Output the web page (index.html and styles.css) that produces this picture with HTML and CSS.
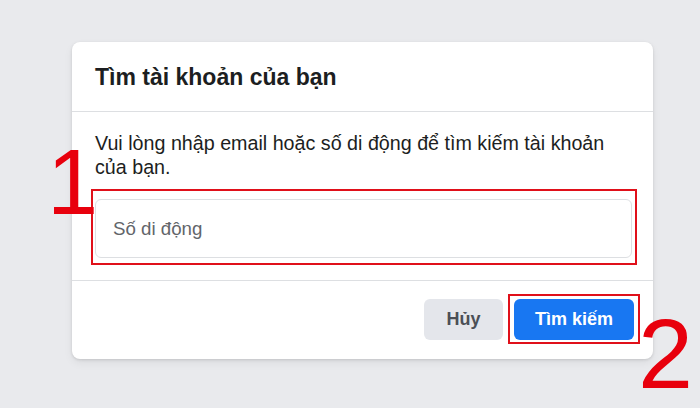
FILE: index.html
```html
<!DOCTYPE html>
<html lang="vi">
<head>
<meta charset="utf-8">
<title>Tìm tài khoản của bạn</title>
<link rel="stylesheet" href="styles.css">
</head>
<body>
<div class="stage">
  <div class="card">
    <div class="card-head">
      <h2 class="title">Tìm tài khoản của bạn</h2>
    </div>
    <div class="card-body">
      <p class="desc">Vui lòng nhập email hoặc số di động để tìm kiếm tài khoản của bạn.</p>
      <div class="mark mark-input">
        <div class="input">Số di động</div>
        <span class="num num-1">1</span>
      </div>
    </div>
    <div class="card-foot">
      <button class="btn btn-cancel">Hủy</button>
      <div class="mark mark-btn">
        <button class="btn btn-primary">Tìm kiếm</button>
        <span class="num num-2">2</span>
      </div>
    </div>
  </div>
</div>
</body>
</html>
```

FILE: styles.css
```css
* { box-sizing: border-box; }
html, body {
  margin: 0;
  padding: 0;
  background: #e9eaed;
  font-family: "Liberation Sans", Arial, Helvetica, sans-serif;
  color: #1c1e21;
}
.stage {
  width: 700px;
  height: 408px;
  padding: 42px 0 0 72px;
}
.card {
  width: 581px;
  background: #fff;
  border-radius: 8px;
  box-shadow: 0 1px 3px rgba(0,0,0,0.12), 0 4px 10px rgba(0,0,0,0.06);
}
.card-head {
  height: 70px;
  display: flex;
  align-items: center;
  padding: 0 23px;
  border-bottom: 1px solid #dddfe2;
}
.title {
  margin: 0;
  font-size: 23px;
  font-weight: bold;
  color: #1c1e21;
  line-height: 26px;
  padding-top: 1px;
}
.card-body {
  padding: 19px 16px 15px 19px;
  border-bottom: 1px solid #dddfe2;
}
.desc {
  margin: 0 0 10px 4px;
  max-width: 525px;
  font-size: 19.7px;
  line-height: 24px;
  color: #1c1e21;
}
.mark {
  position: relative;
  border: 2px solid #e0101a;
}
.mark-input {
  padding: 8px 3px 5px 2px;
}
.input {
  height: 59px;
  border: 1px solid #dddfe2;
  border-radius: 6px;
  padding: 0 17px;
  display: flex;
  align-items: center;
  font-size: 18.7px;
  color: #62656a;
}
.num {
  position: absolute;
  color: #e8000d;
  font-family: "Liberation Sans", Arial, sans-serif;
  line-height: 1;
}
.num-1 {
  font-size: 92px;
  left: -46px;
  top: -55px;
}
.num-2 {
  font-size: 99px;
  left: 128px;
  top: 8px;
}
.card-foot {
  height: 78px;
  display: flex;
  justify-content: flex-end;
  align-items: flex-start;
  padding: 13px 13px 0 0;
  gap: 5px;
}
.btn {
  font-family: "Liberation Sans", Arial, sans-serif;
  font-size: 18px;
  font-weight: bold;
  border: none;
  border-radius: 6px;
  height: 41px;
  padding: 0;
  cursor: pointer;
}
.btn-cancel {
  margin-top: 5px;
  width: 79px;
  background: #e4e6eb;
  color: #4b4f56;
}
.mark-btn {
  padding: 3px 4px 2px 4px;
}
.btn-primary {
  display: block;
  width: 120px;
  background: #1877f2;
  color: #fff;
}
```
